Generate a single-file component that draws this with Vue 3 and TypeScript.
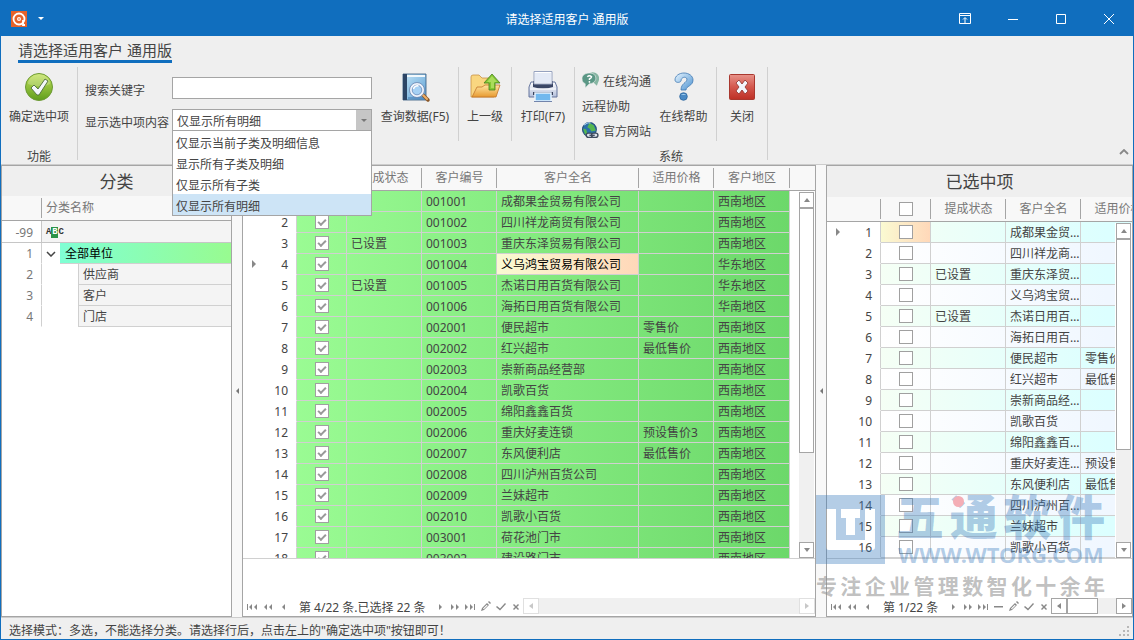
<script setup lang="ts">
import { ref } from 'vue'

interface Customer {
  code: string
  name: string
  area: string
  status?: string
  price?: string
}

const south = '西南地区'
const customers: Customer[] = [
  { code: '001001', name: '成都果金贸易有限公司', area: south },
  { code: '001002', name: '四川祥龙商贸有限公司', area: south },
  { code: '001003', name: '重庆东泽贸易有限公司', area: south, status: '已设置' },
  { code: '001004', name: '义乌鸿宝贸易有限公司', area: '华东地区' },
  { code: '001005', name: '杰诺日用百货有限公司', area: '华东地区', status: '已设置' },
  { code: '001006', name: '海拓日用百货有限公司', area: '华南地区' },
  { code: '002001', name: '便民超市', area: south, price: '零售价' },
  { code: '002002', name: '红兴超市', area: south, price: '最低售价' },
  { code: '002003', name: '崇新商品经营部', area: south },
  { code: '002004', name: '凯歌百货', area: south },
  { code: '002005', name: '绵阳鑫鑫百货', area: south },
  { code: '002006', name: '重庆好麦连锁', area: south, price: '预设售价3' },
  { code: '002007', name: '东风便利店', area: south, price: '最低售价' },
  { code: '002008', name: '四川泸州百货公司', area: south },
  { code: '002009', name: '兰妹超市', area: south },
  { code: '002010', name: '凯歌小百货', area: south },
  { code: '003001', name: '荷花池门市', area: south },
  { code: '003002', name: '建设路门市', area: south },
]
const chosen = customers.slice(0, 16)
const children = ['供应商', '客户', '门店']
const options = ['仅显示当前子类及明细信息', '显示所有子类及明细', '仅显示所有子类', '仅显示所有明细']

const keyword = ref('')
const mode = ref('仅显示所有明细')
const backIcons = ['first', 'fastback', 'prev']
const midIcons = ['next', 'fastnext', 'last', 'edit', 'ok', 'cancel']
const rightIcons = ['next', 'fastnext', 'last', 'minus', 'edit', 'ok', 'cancel']
const paths: Record<string, string> = {
  first: 'M2 4h1v6H2zM7 4v6L4 7zM12 4v6L9 7z',
  fastback: 'M6 4v6L3 7zM11 4v6L8 7z',
  prev: 'M8 4v6L5 7z',
  next: 'M5 4v6l3-3z',
  fastnext: 'M2 4v6l3-3zM7 4v6l3-3z',
  last: 'M1 4v6l3-3zM6 4v6l3-3zM10 4h1v6h-1z',
  edit: 'M2 11l1-3 5-5 2 2-5 5zM4 8.500l.8.8 3.800-3.800-.8-.8zM9 2l1-1 2 2-1 1z',
  ok: 'M2 7l1-1 3 2.500 5-5.500 1 1-6 6.500z',
  cancel: 'M4 5l1-1 2 2 2-2 1 1-2 2 2 2-1 1-2-2-2 2-1-1 2-2z',
  minus: 'M2 6h9v1.500H2z',
}
const slogan = '专注企业管理数智化十余年'.split('')
const brand = '五通软件'.split('')
</script>

<template>
  <div class="window" lang="zh-CN">
    <header class="titlebar">
      <div class="title-left">
        <svg class="logo" viewBox="0 0 16 16">
          <rect width="16" height="16" fill="#e8622a" />
          <circle cx="8" cy="8" r="5.500" fill="none" stroke="#fff" stroke-width="1.800" />
          <circle cx="8" cy="8" r="2" fill="#fff" />
          <circle cx="8" cy="8" r=".8" fill="#e8622a" />
          <path d="M12 9v5h2" fill="none" stroke="#fff" stroke-width="1.800" />
        </svg>
        <button class="quick" aria-label="快速访问"><svg width="6" height="3" viewBox="0 0 6 3"><path d="M0 0h6L3 3z" fill="#fff" /></svg></button>
      </div>
      <h1>请选择适用客户 通用版</h1>
      <div class="title-right">
        <button aria-label="功能区选项">
          <svg width="12" height="12" viewBox="0 0 12 12"><path d="M.5.5h11v10H.5zM.5 2.500h11M6 10V5M4 6.500L6 4.500l2 2" /></svg>
        </button>
        <button aria-label="最小化"><svg width="12" height="12" viewBox="0 0 12 12"><path d="M1 6.500h10" /></svg></button>
        <button aria-label="最大化"><svg width="12" height="12" viewBox="0 0 12 12"><path d="M1.500 1.500h9v9h-9z" /></svg></button>
        <button aria-label="关闭窗口"><svg width="12" height="12" viewBox="0 0 12 12"><path d="M1 1l10 10M11 1L1 11" /></svg></button>
      </div>
    </header>

    <section class="ribbon">
      <div class="tabs"><button class="tab">请选择适用客户 通用版</button></div>
      <div class="groups">
        <div class="group func">
          <div class="group-body">
            <button class="big">
              <svg viewBox="0 0 32 32">
                <defs><linearGradient id="gOk" x1="0" y1="0" x2="0" y2="1"><stop offset="0" stop-color="#c3e25a" /><stop offset="1" stop-color="#5f9d1c" /></linearGradient></defs>
                <circle cx="16" cy="16" r="13.500" fill="url(#gOk)" stroke="#6d9a35" />
                <path d="M5 13a11 10 0 0 1 22 0q-9 5-22 0" fill="#fff" opacity=".22" />
                <path d="M8 17l3-3 4 4 7-10 3 2-9 14h-2z" fill="#f3f7fb" stroke="#4d6d3a" stroke-width=".9" />
              </svg>
              <span>确定选中项</span>
            </button>
          </div>
          <div class="caption">功能</div>
        </div>

        <div class="group query">
          <div class="group-body">
            <div class="fields">
              <label for="kw">搜索关键字</label>
              <input id="kw" v-model="keyword" type="text" />
              <label for="mode">显示选中项内容</label>
              <div class="combo">
                <select id="mode" v-model="mode">
                  <option v-for="o in options" :key="o">{{ o }}</option>
                </select>
                <span class="drop"><svg width="6" height="3" viewBox="0 0 6 3"><path d="M0 0h6L3 3z" fill="#777" /></svg></span>
                <ul class="list" role="listbox" aria-label="显示选中项内容">
                  <li v-for="o in options" :key="o" role="option" :aria-selected="o === mode" :class="{ on: o === mode }" @click="mode = o">{{ o }}</li>
                </ul>
              </div>
            </div>
            <button class="big w-search">
              <svg viewBox="0 0 32 32">
                <defs><linearGradient id="gBook" x1="0" y1="0" x2="1" y2="1"><stop offset="0" stop-color="#c2e4f7" /><stop offset="1" stop-color="#5c9fd4" /></linearGradient></defs>
                <path d="M4 3h23v26H4z" fill="url(#gBook)" stroke="#32587f" stroke-width=".8" />
                <path d="M4 3h4v26H4z" fill="#2c4566" />
                <path d="M8 4h18v2H8z" fill="#f1f8fc" /><path d="M9 27h17" stroke="#3e76ae" />
                <path d="M23 23l6 6" stroke="#8a5728" stroke-width="3.500" stroke-linecap="round" /><path d="M24 24l4 4" stroke="#efb068" stroke-width="2" stroke-linecap="round" />
                <circle cx="18" cy="19" r="6" fill="#c8e4fa" stroke="#eef3fb" stroke-width="2.500" /><circle cx="18" cy="19" r="7.500" fill="none" stroke="#6d86b0" stroke-width=".8" /><circle cx="18" cy="19" r="4.800" fill="#a5d0f4" stroke="#6d8cba" stroke-width=".8" /><path d="M14.500 18a4 4 0 0 1 5-3" fill="none" stroke="#fff" stroke-width="1.500" />
              </svg>
              <span>查询数据(F5)</span>
            </button>
            <button class="big w-up">
              <svg viewBox="0 0 32 32">
                <defs><linearGradient id="gFold" x1="0" y1="0" x2="0" y2="1"><stop offset="0" stop-color="#ffe5a0" /><stop offset="1" stop-color="#e79a31" /></linearGradient></defs>
                <path d="M2 6q0-2 2-2h6l3 3h12v19H2z" fill="#f9d680" stroke="#c99345" stroke-width=".8" />
                <path d="M8 16l5 0 3-2h15l-4 12H3z" fill="url(#gFold)" stroke="#c2752a" stroke-width=".8" />
                <path d="M23 3l8 9h-5v7h-6v-7h-5z" fill="#83c831" stroke="#467d20" stroke-width=".8" /><path d="M23 5l5 6h-3v6h-3v-6h-4z" fill="#c5e978" opacity=".6" />
              </svg>
              <span>上一级</span>
            </button>
            <button class="big w-print">
              <svg viewBox="0 0 32 32">
                <defs><linearGradient id="gPrn" x1="0" y1="0" x2="0" y2="1"><stop offset="0" stop-color="#fff" /><stop offset="1" stop-color="#b3bfda" /></linearGradient></defs>
                <path d="M4 11h24l2 5v10H2V16z" fill="url(#gPrn)" stroke="#65759d" />
                <path d="M6 10h20v6q-10 3-20 0z" fill="#3a4665" /><path d="M7 0.500h18V13H7z" fill="#fff" stroke="#96a2bf" /><path d="M8 2h16v10H8z" fill="#e4eaf6" />
                <path d="M3 18h26" stroke="#fff" /><path d="M6 21h20v3H6z" fill="#39435e" /><path d="M8 22h16v8H8z" fill="#71b8ee" stroke="#e8f4ff" stroke-width="1.500" /><path d="M7 30.500h18" stroke="#7284ab" />
              </svg>
              <span>打印(F7)</span>
            </button>
          </div>
        </div>

        <div class="group system">
          <div class="group-body">
            <div class="stack">
              <button class="small">
                <svg viewBox="0 0 16 16"><path d="M5 3Q8-1 13 1q5 3 2 9l-1 3-2-2z" fill="#86b5a2" /><path d="M7 1c4 0 6 2 6 5s-3 5-6 5l-4 4 0-4C1 10 0 9 0 6c0-3 3-5 7-5z" fill="#5b9785" stroke="#efefef" stroke-width=".6" /><path d="M5 4.500q2-2 4 0 0 1-2 2v1M7 8.500v1.500" fill="none" stroke="#fff" stroke-width="1.400" /></svg>在线沟通
              </button>
              <button class="small">远程协助</button>
              <button class="small">
                <svg viewBox="0 0 16 16"><circle cx="7" cy="7" r="6.500" fill="#2b70aa" stroke="#254e79" /><path d="M7 1l4 2 2 5-4 1-2-3-2-1 1-2zM1 6l3 1 1 4-2 1z" fill="#55b74f" /><path d="M2 3q3-3 6-2" stroke="#b5dcf5" fill="none" /><rect x="4" y="10.500" width="6" height="4" rx="2" fill="#dce3ec" stroke="#3f4b5e" stroke-width="1.300" /><rect x="9" y="10.500" width="6" height="4" rx="2" fill="#dce3ec" stroke="#3f4b5e" stroke-width="1.300" /><path d="M7 12.500h5" stroke="#3f4b5e" stroke-width="1.300" /></svg>官方网站
              </button>
            </div>
            <button class="big w-help">
              <svg viewBox="0 0 32 32">
                <defs><linearGradient id="gHelp" x1="0" y1="0" x2="1" y2="1"><stop offset="0" stop-color="#e5f4ff" /><stop offset="1" stop-color="#4d92d0" /></linearGradient></defs>
                <path d="M7 9C7 5 11 2 16 2c5 0 9 3 9 7 0 6-7 6-7 10h-5c0-7 6-7 6-11-1-3-6-2-6 2-1 2-6 2-6-1z" fill="url(#gHelp)" stroke="#4079b3" stroke-width=".8" />
                <circle cx="15.500" cy="25.500" r="3.800" fill="#4b8ac5" stroke="#2c649d" stroke-width=".8" /><path d="M13 24a3 2 0 0 1 5 0" fill="#a5d0f0" />
              </svg>
              <span>在线帮助</span>
            </button>
            <button class="big w-close">
              <svg viewBox="0 0 32 32">
                <defs><linearGradient id="gX" x1="0" y1="0" x2="0" y2="1"><stop offset="0" stop-color="#e8938a" /><stop offset=".5" stop-color="#d4574d" /><stop offset="1" stop-color="#bd3026" /></linearGradient></defs>
                <rect x="3.500" y="3.500" width="25" height="25" rx="1" fill="url(#gX)" stroke="#a9382f" />
                <path d="M10 12l3-3 3 4 3-4 3 3-3 4 3 4-3 3-3-4-3 4-3-3 3-4z" fill="#f3f6fc" stroke="#8b302b" stroke-width=".8" />
              </svg>
              <span>关闭</span>
            </button>
          </div>
          <div class="caption">系统</div>
        </div>
        <button class="collapse" aria-label="折叠功能区"><svg width="10" height="6" viewBox="0 0 10 6"><path d="M1 5l4-4 4 4" fill="none" stroke="#888" stroke-width="1.800" /></svg></button>
      </div>
    </section>

    <main class="work">
      <section class="panel left">
        <h2 class="left-title">分类</h2>
        <table class="tree">
          <colgroup><col class="c-no" /><col class="c-exp" /><col class="c-ind" /><col /></colgroup>
          <thead>
            <tr><th></th><th colspan="3">分类名称</th></tr>
          </thead>
          <tbody>
            <tr class="filter"><td class="no">-99</td><td colspan="3" class="leaf"><span class="abc"><i>A</i><b>B</b><i>C</i></span></td></tr>
            <tr>
              <td class="no">1</td>
              <td class="exp"><svg width="10" height="6" viewBox="0 0 10 6"><path d="M1 1l4 4 4-4" fill="none" stroke="#444" stroke-width="1.500" /></svg></td>
              <td colspan="2" class="root">全部单位</td>
            </tr>
            <tr v-for="(c, i) in children" :key="c">
              <td class="no">{{ i + 2 }}</td><td colspan="2" class="indent"></td><td class="leaf">{{ c }}</td>
            </tr>
          </tbody>
        </table>
      </section>

      <div class="splitter"><svg width="3" height="6" viewBox="0 0 3 6"><path d="M3 0v6L0 3z" fill="#777" /></svg></div>

      <section class="panel middle">
        <div class="grid">
          <table class="data green">
            <colgroup><col class="w54" /><col class="w50" /><col class="w75" /><col class="w75" /><col class="w142" /><col class="w75" /><col class="w76" /></colgroup>
            <thead>
              <tr>
                <th></th><th><input type="checkbox" checked aria-label="全选" /></th>
                <th>提成状态</th><th>客户编号</th><th>客户全名</th><th>适用价格</th><th>客户地区</th>
              </tr>
            </thead>
            <tbody>
              <tr v-for="(c, i) in customers" :key="c.code">
                <td class="no"><svg v-if="i === 3" class="mark" width="4" height="8" viewBox="0 0 4 8"><path d="M0 0l4 4-4 4z" fill="#888" /></svg>{{ i + 1 }}</td>
                <td class="chk"><input type="checkbox" checked :aria-label="c.name" /></td>
                <td>{{ c.status }}</td><td>{{ c.code }}</td>
                <td :class="{ focus: i === 3 }">{{ c.name }}</td>
                <td>{{ c.price }}</td><td>{{ c.area }}</td>
              </tr>
            </tbody>
          </table>
          <div class="vscroll">
            <button aria-label="向上滚动"><svg width="6" height="4" viewBox="0 0 6 4"><path d="M0 4h6L3 0z" /></svg></button>
            <div class="thumb"></div>
            <button class="end" aria-label="向下滚动"><svg width="6" height="4" viewBox="0 0 6 4"><path d="M0 0h6L3 4z" /></svg></button>
          </div>
        </div>
        <footer class="nav">
          <button v-for="n in backIcons" :key="n" class="back" :aria-label="n"><svg viewBox="0 0 13 13"><path fill-rule="evenodd" :d="paths[n]" /></svg></button>
          <span class="pos wide">第 4/22 条.已选择 22 条</span>
          <button v-for="n in midIcons" :key="n" :aria-label="n"><svg viewBox="0 0 13 13"><path fill-rule="evenodd" :d="paths[n]" /></svg></button>
          <div class="hscroll off">
            <button aria-label="向左滚动"><svg width="4" height="6" viewBox="0 0 4 6"><path d="M4 0v6L0 3z" /></svg></button>
            <button class="end" aria-label="向右滚动"><svg width="4" height="6" viewBox="0 0 4 6"><path d="M0 0v6l4-3z" /></svg></button>
          </div>
        </footer>
      </section>

      <div class="splitter"><svg width="3" height="6" viewBox="0 0 3 6"><path d="M3 0v6L0 3z" fill="#777" /></svg></div>

      <section class="panel right">
        <h2>已选中项</h2>
        <div class="grid">
          <table class="data cyan">
            <colgroup><col class="w54" /><col class="w50" /><col class="w75" /><col class="w75" /><col class="w75" /></colgroup>
            <thead>
              <tr><th></th><th><input type="checkbox" aria-label="全选已选中项" /></th><th>提成状态</th><th>客户全名</th><th>适用价格</th></tr>
            </thead>
            <tbody>
              <tr v-for="(c, i) in chosen" :key="c.code">
                <td class="no"><svg v-if="i === 0" class="mark" width="4" height="8" viewBox="0 0 4 8"><path d="M0 0l4 4-4 4z" fill="#888" /></svg>{{ i + 1 }}</td>
                <td class="chk" :class="{ focus: i === 0 }"><input type="checkbox" :aria-label="c.name" /></td>
                <td>{{ c.status }}</td><td>{{ c.name }}</td><td>{{ c.price }}</td>
              </tr>
            </tbody>
          </table>
          <div class="vscroll">
            <button aria-label="向上滚动"><svg width="6" height="4" viewBox="0 0 6 4"><path d="M0 4h6L3 0z" /></svg></button>
            <div class="thumb short"></div>
            <button class="end" aria-label="向下滚动"><svg width="6" height="4" viewBox="0 0 6 4"><path d="M0 0h6L3 4z" /></svg></button>
          </div>
        </div>
        <footer class="nav">
          <button v-for="n in backIcons" :key="n" class="back" :aria-label="n"><svg viewBox="0 0 13 13"><path fill-rule="evenodd" :d="paths[n]" /></svg></button>
          <span class="pos">第 1/22 条</span>
          <button v-for="n in rightIcons" :key="n" :aria-label="n"><svg viewBox="0 0 13 13"><path fill-rule="evenodd" :d="paths[n]" /></svg></button>
          <div class="hscroll">
            <button aria-label="向左滚动"><svg width="4" height="6" viewBox="0 0 4 6"><path d="M4 0v6L0 3z" /></svg></button>
            <div class="hthumb"></div>
            <button class="end" aria-label="向右滚动"><svg width="4" height="6" viewBox="0 0 4 6"><path d="M0 0v6l4-3z" /></svg></button>
          </div>
        </footer>
      </section>

      <div class="watermark">
        <div class="wm-top">
          <svg width="69" height="69" viewBox="0 0 69 69">
            <path fill-rule="evenodd" fill="#3a7cbd" fill-opacity=".38" d="M0 0h69v69H0zM10 14h10v31h29V14h10v38q0 3-3 3H13q-3 0-3-3zM25 14h19v9h-5v17h-9V23h-5z" />
          </svg>
          <div class="wm-text">
            <div class="wm-brand"><span v-for="b in brand" :key="b">{{ b }}</span></div>
            <div class="wm-url">WWW.WTORG.COM</div>
          </div>
        </div>
        <div class="wm-slogan"><span v-for="(s, i) in slogan" :key="i">{{ s }}</span></div>
        <span class="wm-dot"></span>
      </div>
    </main>

    <footer class="status">
      <span>选择模式：多选，不能选择分类。请选择行后，点击左上的"确定选中项"按钮即可！</span>
      <svg width="11" height="11" viewBox="0 0 11 11"><path d="M8 0h2v2H8zM4 4h2v2H4zM8 4h2v2H8zM0 8h2v2H0zM4 8h2v2H4zM8 8h2v2H8z" fill="#b8b8b8" /></svg>
    </footer>
  </div>
</template>

<style>
body { margin: 0; }
</style>

<style scoped>
.window, .window * { box-sizing: border-box; }
.window {
  height: 100vh; display: flex; flex-direction: column; overflow: hidden;
  border: 1px solid #106ebe; background: #f8f8f8; color: #444;
  font: 12px/16px "Noto Sans", "Noto Sans CJK SC", sans-serif;
}
button, input, select { font: inherit; color: inherit; margin: 0; }
button { background: none; border: 0; padding: 0; display: flex; align-items: center; justify-content: center; }
svg { display: block; flex: none; }
h1, h2 { margin: 0; font-weight: 400; }

.titlebar { height: 35px; flex: none; background: #106ebe; color: #fff; display: grid; grid-template-columns: 1fr auto 1fr; align-items: center; }
.titlebar h1 { font-size: 12px; padding-top: 2px; }
.title-left { display: flex; align-items: center; gap: 11px; padding-left: 10px; }
.logo { width: 16px; height: 16px; }
.title-right { display: flex; justify-content: flex-end; }
.title-right button { width: 48px; height: 35px; }
.title-right path { fill: none; stroke: #fff; }

.ribbon { flex: none; background: #efefef; border-bottom: 1px solid #ccc; }
.tabs { padding-left: 17px; height: 31px; }
.tab { height: 27px; padding-top: 3px; font-size: 15px; border-bottom: 3px solid #106ebe; }
.groups { display: flex; height: 97px; }
.group { display: flex; flex-direction: column; justify-content: space-between; background: linear-gradient(#d0d0d0, #d0d0d0) right top / 1px 93px no-repeat; padding-right: 1px; }
.group-body { display: flex; align-items: flex-start; }
.caption { text-align: center; height: 15px; }
.big { flex-direction: column; height: 74px; padding-top: 4px; justify-content: flex-start; gap: 5px; white-space: nowrap; }
.big svg { width: 32px; height: 32px; }
.big span { line-height: 18px; }
.func .big { width: 76px; }
.w-search { width: 87px; }
.w-up { width: 53px; }
.w-search, .w-up, .w-help { background: linear-gradient(#d0d0d0, #d0d0d0) right top / 1px 74px no-repeat; padding-right: 1px; }
.w-print { width: 62px; }
.w-help { width: 66px; }
.w-close { width: 50px; }
.fields { display: grid; grid-template-columns: 87px 200px; grid-auto-rows: 22px; row-gap: 10px; padding: 10px 0 0 7px; }
.fields label { line-height: 24px; padding-top: 2px; white-space: nowrap; }
.fields input, .combo select { width: 100%; height: 22px; border: 1px solid #a5a5a5; background: #fff; padding: 3px 4px 0; border-radius: 0; outline: 0; }
.combo { position: relative; }
.combo select { appearance: none; }
.drop { position: absolute; top: 1px; right: 1px; width: 15px; height: 20px; background: #c6c6c6; display: flex; align-items: center; justify-content: center; pointer-events: none; }
.list { position: absolute; z-index: 5; left: 0; right: 0; top: 22px; margin: 0; padding: 0; list-style: none; background: #fff; border: 1px solid #a5a5a5; border-top: 0; }
.list li { height: 21px; line-height: 26px; padding: 0 3px; }
.list .on { background: #cde4f6; }
.stack { width: 76px; padding: 2px 0 0 7px; }
.small { height: 25px; gap: 4px; justify-content: flex-start; white-space: nowrap; }
.small svg { width: 17px; height: 17px; margin-bottom: 3px; }
.collapse { margin: 82px 4px 0 auto; width: 10px; height: 6px; }

.work { flex: 1; min-height: 0; display: flex; position: relative; }
.panel { border: 1px solid #a5a5a5; background: #fff; display: flex; flex-direction: column; min-width: 0; overflow: hidden; }
.left { flex: 0 0 231px; }
.middle { flex: 1; }
.right { flex: 0 0 307px; }
.splitter { flex: 0 0 10px; display: flex; align-items: center; justify-content: center; background: #f8f8f8; }
h2 { height: 31px; line-height: 31px; flex: none; text-align: center; font-size: 17px; background: #efefef; }
.left-title { height: 30px; }

table { border-collapse: separate; border-spacing: 0; table-layout: fixed; }
th, td { padding: 0; white-space: nowrap; overflow: hidden; font-weight: 400; text-align: left; }
th { height: 25px; color: #777; background: #f8f8f8; border-bottom: 1px solid #a5a5a5; }
.tree { width: 100%; }
.c-no { width: 40px; }
.c-exp { width: 18px; }
.c-ind { width: 18px; }
.tree th:first-child { background: linear-gradient(#a5a5a5, #a5a5a5) right center / 1px 20px no-repeat #f8f8f8; }
.tree th + th { padding-left: 4px; }
.tree td { height: 21px; border-bottom: 1px solid #d0d0d0; line-height: 18px; padding-top: 2px; }
.tree .filter td { height: 22px; border-color: #c6c6c6; }
.tree .no { text-align: right; padding-right: 8px; color: #777; border-right: 1px solid #d0d0d0; border-bottom-color: transparent; }
.tree .exp, .tree .indent { border-bottom-color: transparent; }
.exp svg { margin: 0 auto; }
.tree .root { background: linear-gradient(90deg, #7fffd4, #98fb90); color: #000; padding-left: 5px; }
.tree .leaf { background: #f4f4f4; padding-left: 4px; }
.tree .indent + .leaf { border-left: 1px solid #d0d0d0; }
.abc { display: flex; align-items: center; font: bold 9px/11px "Liberation Mono", monospace; color: #333; }
.abc i { font-style: normal; }
.abc b { background: #2b9348; color: #fff; width: 7px; text-align: center; }

.grid { flex: 1; min-height: 0; position: relative; overflow: hidden; border-bottom: 1px solid #d0d0d0; }
.middle .grid { background: linear-gradient(#f8f8f8, #f8f8f8) top / 100% 24px no-repeat, linear-gradient(#a5a5a5, #a5a5a5) top / 100% 25px no-repeat; }
.w54 { width: 54px; }
.w50 { width: 50px; }
.w75 { width: 75px; }
.w76 { width: 76px; }
.w142 { width: 142px; }
.green { width: 547px; }
.cyan { width: 329px; }
.data th { text-align: center; background: linear-gradient(#a5a5a5, #a5a5a5) right center / 1px 20px no-repeat #f8f8f8; }
.data td { height: 21px; line-height: 18px; border-right: 1px solid #d0d0d0; border-bottom: 1px solid #d0d0d0; padding: 2px 0 0 4px; text-overflow: ellipsis; }
.data .no { background: #fff; text-align: right; padding: 2px 8px 0 0; border-bottom-color: #fff; position: relative; }
.data .chk { padding: 0; }
.mark { position: absolute; left: 9px; top: 6px; }
.green tbody tr { background: linear-gradient(90deg, #9fff98, #6cd86a); }
.cyan tbody tr { background: linear-gradient(90deg, #fff 16%, #f0f7ff 85%); }
.cyan tbody tr:nth-child(odd) { background: linear-gradient(90deg, #f5fff5 16%, #dcffff 85%); }
.data td.focus { background: linear-gradient(90deg, #fafad2, #ffd8b9); color: #000; }
input[type="checkbox"] { appearance: none; display: flex; width: 14px; height: 14px; margin: 0 auto; border: 1px solid #a0a0a0; background: #fff; justify-content: center; align-items: center; }
input[type="checkbox"]:checked::before { content: ""; width: 8px; height: 5px; margin-bottom: 2px; border-left: 2px solid #999; border-bottom: 2px solid #999; transform: rotate(-45deg); box-sizing: border-box; }

.vscroll { position: absolute; right: 1px; top: 26px; bottom: 0; width: 15px; background: #f0f0f0; display: flex; flex-direction: column; }
.vscroll button, .hscroll button { border: 1px solid #a5a5a5; background: #fff; width: 100%; height: 16px; }
.vscroll path, .nav path { fill: #888; }
.thumb { flex: 0 0 67%; border: 1px solid #a5a5a5; background: #fff; }
.thumb.short { flex-basis: 63%; }
.right .vscroll { box-shadow: -1px 0 #fff, 1px 0 #fff; }
.end { margin-top: auto; }

.nav { height: 57px; flex: none; display: flex; align-items: flex-end; padding-bottom: 2px; }
.nav button { width: 15px; height: 16px; }
.nav .back { width: 16px; }
.nav button svg { width: 13px; height: 13px; }
.pos { margin-left: 8px; min-width: 63px; line-height: 12px; white-space: nowrap; }
.pos.wide { min-width: 134px; }
.hscroll { flex: 1; display: flex; height: 16px; background: #f0f0f0; }
.nav .hscroll button { width: 16px; }
.nav .hscroll svg { width: 4px; height: 6px; }
.hscroll .end { margin: 0 0 0 auto; }
.hthumb { width: 31px; background: #fff; border: 1px solid #a5a5a5; }
.off button { border-color: #e0e0e0; }
.nav .off path { fill: #c8c8c8; }

.watermark { position: absolute; z-index: 4; right: 28px; bottom: 20px; width: 289px; pointer-events: none; color: rgba(58, 124, 189, 0.38); font-weight: 700; }
.wm-top { display: flex; gap: 11px; }
.wm-text { flex: 1; }
.wm-brand { display: flex; justify-content: space-between; font-size: 48px; line-height: 44px; font-weight: 900; }
.wm-url { font-size: 22px; line-height: 22px; margin-top: 4px; margin-left: 2px; }
.wm-slogan { display: flex; justify-content: space-between; font-size: 21px; line-height: 22px; margin-top: 10px; color: rgba(140, 140, 140, 0.55); }
.wm-dot { position: absolute; left: 137px; top: 1px; width: 11px; height: 11px; border-radius: 50%; background: #f4aeb6; }

.status { height: 22px; flex: none; display: flex; justify-content: space-between; background: #efefef; border-top: 1px solid #ccc; padding: 5px 3px 0 8px; }
.status svg { margin-top: 3px; }
</style>
